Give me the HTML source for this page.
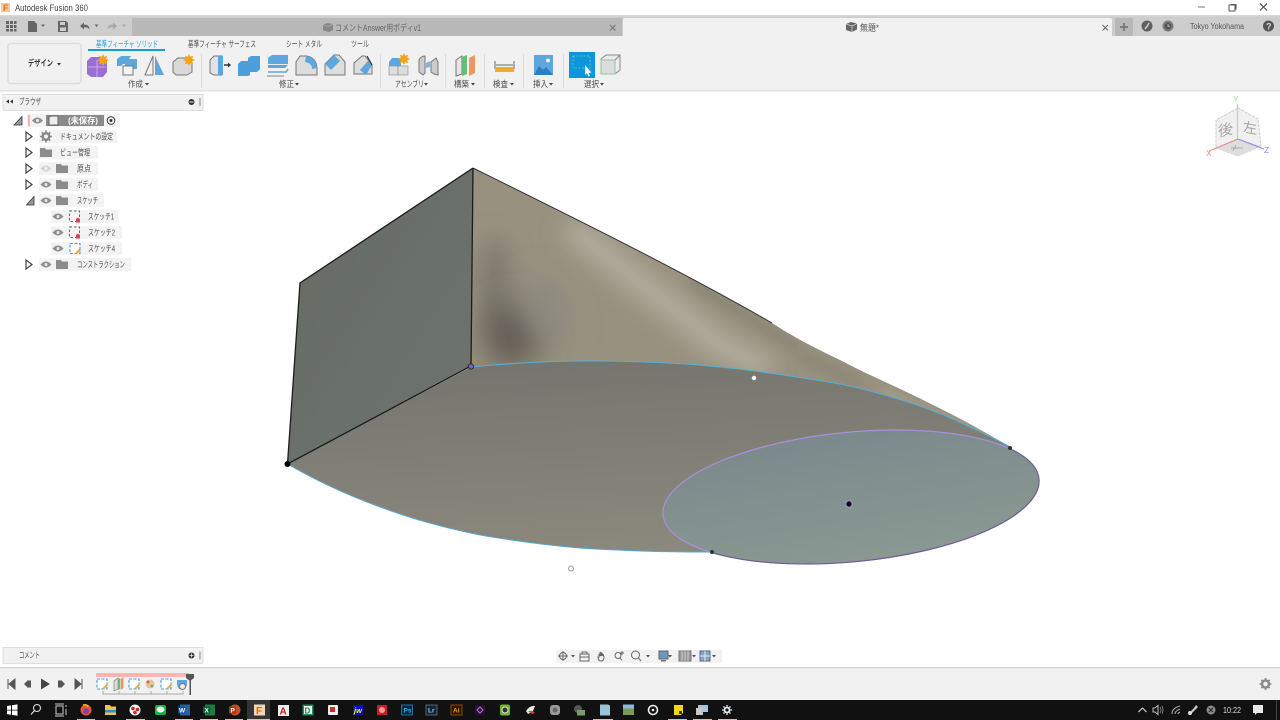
<!DOCTYPE html>
<html lang="ja"><head><meta charset="utf-8"><title>Autodesk Fusion 360</title>
<style>
html,body{margin:0;padding:0;width:1280px;height:720px;overflow:hidden;background:#fff}
svg{display:block;filter:blur(.3px)}
text{font-family:"Liberation Sans","Noto Sans CJK JP",sans-serif;fill:#4c4c4c;font-size:8.5px}
</style></head><body>
<svg width="1280" height="720" viewBox="0 0 1280 720" xmlns="http://www.w3.org/2000/svg">
<defs>
<linearGradient id="gL" x1="0" y1="0" x2="1" y2="1"><stop offset="0" stop-color="#666a63"/><stop offset="1" stop-color="#6d7570"/></linearGradient>
<linearGradient id="gB" x1="0.2" y1="0" x2="0.4" y2="1"><stop offset="0" stop-color="#75756f"/><stop offset="1" stop-color="#8b897d"/></linearGradient>
<linearGradient id="gE" x1="0.3" y1="0" x2="0.5" y2="1"><stop offset="0" stop-color="#7b898c"/><stop offset="1" stop-color="#8a9892"/></linearGradient>
<filter id="b4" x="-50%" y="-50%" width="200%" height="200%"><feGaussianBlur stdDeviation="5"/></filter>
<filter id="b8" x="-60%" y="-60%" width="220%" height="220%"><feGaussianBlur stdDeviation="11"/></filter>
<filter id="b14" x="-100%" y="-100%" width="300%" height="300%"><feGaussianBlur stdDeviation="15"/></filter>
<clipPath id="cS"><path d="M473 168C570 216 680 270 772 323C795 338 815 348 840 360C870 376 900 388 929 403C960 418 985 432 1010 447C998 440 985 434 972 428C952 418 930 409 908 402C885 395 865 389 840 384C812 379 785 375 754 371C732 368 710 366 686 364C655 362 625 361 590 361C550 361 510 363 471 367Z"/></clipPath>
<clipPath id="cD"><path d="M1010 447H1060V590H712V552Z"/></clipPath>
<g id="eye"><path d="M-5.500 0Q0 -6 5.500 0Q0 6 -5.500 0Z" fill="#8f8f8f"/><circle r="1.500" fill="#eee"/></g>
<g id="fold"><path d="M-6 -4.500H-1L0 -3H6V4.500H-6Z" fill="#8c8c8c"/></g>
<g id="tri"><path d="M-3 -4.500L3 0L-3 4.500Z" fill="#fff" stroke="#444" stroke-width="1.200"/></g>
<g id="sk"><rect x="-5.500" y="-5.500" width="10" height="10.500" fill="none" stroke="#666" stroke-width="1" stroke-dasharray="2.500 2"/><path d="M1 6V2.500L3 1l2 1.500V6Z" fill="#d9484f"/></g>
<g id="sk2"><rect x="-5" y="-5" width="10" height="10" fill="#fff" stroke="#4a9ed8" stroke-width="1.100" stroke-dasharray="3 1.500"/><path d="M1 5L5 1" stroke="#eca93a" stroke-width="2"/></g>
<g id="star"><path d="M0 -6L1.300 -3.200 4.200 -4.200 3.200 -1.300 6 0 3.200 1.300 4.200 4.200 1.300 3.200 0 6 -1.300 3.200 -4.200 4.200 -3.200 1.300 -6 0 -3.200 -1.300 -4.200 -4.200 -1.300 -3.200Z" fill="#f6a416"/></g>
</defs>

<!-- Title bar -->
<rect width="1280" height="15" fill="#fff"/>
<rect x="1" y="3" width="9" height="9" fill="#f6c9a0"/>
<text x="3" y="11" style="font-size:9px;font-weight:bold;fill:#d9742b">F</text>
<text x="15" y="11" textLength="73" lengthAdjust="spacingAndGlyphs" style="font-size:9.500px;fill:#444">Autodesk Fusion 360</text>
<rect x="1198" y="6.500" width="7" height="1" fill="#777"/>
<rect x="1229" y="5" width="6" height="6" fill="none" stroke="#555"/><path d="M1231 4.500h5v5" fill="none" stroke="#555"/>
<path d="M1260 3.500l7 7m0-7l-7 7" stroke="#444" fill="none"/>

<!-- Tab bar -->
<rect y="15" width="1280" height="21" fill="#cdcdcd"/>
<rect y="15" width="1280" height="1.500" fill="#d8d8d8"/>
<rect x="132" y="18" width="490" height="18" fill="#b9b9b9"/>
<path d="M623 36V20q0-2 2-2H1110q2 0 2 2V36Z" fill="#f1f1f1"/>
<g fill="#666"><rect x="6" y="21" width="3" height="3"/><rect x="10" y="21" width="3" height="3"/><rect x="14" y="21" width="2.500" height="3"/><rect x="6" y="25" width="3" height="3"/><rect x="10" y="25" width="3" height="3"/><rect x="14" y="25" width="2.500" height="3"/><rect x="6" y="29" width="3" height="2.500"/><rect x="10" y="29" width="3" height="2.500"/><rect x="14" y="29" width="2.500" height="2.500"/></g>
<path d="M28 21h6l3 3v8h-9Z" fill="#666"/><path d="M41 24.500h4l-2 2.500Z" fill="#666"/>
<path d="M58 21h8l2 2v9H58Z" fill="#666"/><rect x="60" y="22" width="5" height="3" fill="#cdcdcd"/><rect x="60" y="27.500" width="6" height="3.500" fill="#cdcdcd"/>
<path d="M80 26l4-3.500v2.200c3-.3 5.500 1.200 5.500 5-1-2-3-2.600-5.500-2.400v2.200Z" fill="#666"/><path d="M94.500 24.500h4l-2 2.500Z" fill="#666"/>
<path d="M117 26l-4-3.500v2.200c-3-.3-5.500 1.200-5.500 5 1-2 3-2.600 5.500-2.400v2.200Z" fill="#a6a6a6"/><path d="M122 24.500h4l-2 2.500Z" fill="#a6a6a6"/>
<path d="M323 25l4-2 6 1v6l-4 2-6-1.500Z" fill="#888"/><path d="M323 25l6 1.500 4-2.500" fill="none" stroke="#b9b9b9" stroke-width=".6"/>
<text x="335" y="31" textLength="86" lengthAdjust="spacingAndGlyphs" style="font-size:9px;fill:#666">コメントAnswer用ボディv1</text>
<path d="M610 25l5.500 5.500m0-5.500l-5.500 5.500" stroke="#777" stroke-width="1.200"/>
<path d="M846 24l5-2 6 1.500v6l-5 2.500-6-2Z" fill="#666"/><path d="M846 24l6 2 5-2.500M852 26v6" fill="none" stroke="#f1f1f1" stroke-width=".6"/>
<text x="860" y="31" textLength="19" lengthAdjust="spacingAndGlyphs" style="font-size:9px;fill:#555">無題*</text>
<path d="M1102.500 25l5.500 5.500m0-5.500l-5.500 5.500" stroke="#666" stroke-width="1"/>
<rect x="1115" y="18" width="18" height="18" fill="#b8b8b8"/>
<path d="M1120 27h8M1124 23v8" stroke="#777" stroke-width="1.800"/>
<circle cx="1147" cy="26" r="5.500" fill="#5f5f5f"/><path d="M1145 29l3-4 1-2" stroke="#cdcdcd" stroke-width="1.500" fill="none"/>
<circle cx="1168" cy="26" r="5.500" fill="#7c7c7c"/><circle cx="1168" cy="26" r="3.500" fill="#555"/><path d="M1168 24v2.300h2" stroke="#ccc" fill="none" stroke-width=".8"/>
<text x="1190" y="29" textLength="54" lengthAdjust="spacingAndGlyphs" style="font-size:8px;fill:#555">Tokyo Yokohama</text>
<circle cx="1268.500" cy="26" r="5.500" fill="#555"/><text x="1266" y="29.500" style="font-size:9px;font-weight:bold;fill:#ddd">?</text>

<!-- Ribbon -->
<rect y="36" width="1280" height="54" fill="#f1f1f1"/>
<rect y="90" width="1280" height="1.500" fill="#e2e2e2"/>
<rect x="8" y="43.500" width="73" height="40" rx="3" fill="#f1f1f1" stroke="#dcdcdc" stroke-width="1.500"/>
<text x="28" y="66" textLength="25" lengthAdjust="spacingAndGlyphs" style="font-size:8.500px;font-weight:bold;fill:#333">デザイン</text>
<path d="M57 63h4l-2 2.500Z" fill="#333"/>

<text x="96" y="47" textLength="62" lengthAdjust="spacingAndGlyphs" style="fill:#2a9ad6;font-size:8.500px">基準フィーチャ ソリッド</text>
<rect x="88" y="49" width="77" height="2" fill="#1a9bd7"/>
<text x="188" y="47" textLength="68" lengthAdjust="spacingAndGlyphs">基準フィーチャ サーフェス</text>
<text x="286" y="47" textLength="36" lengthAdjust="spacingAndGlyphs">シート メタル</text>
<text x="351" y="47" textLength="18" lengthAdjust="spacingAndGlyphs">ツール</text>

<g fill="#dcdcdc"><rect x="201" y="54" width="1" height="34"/><rect x="380" y="54" width="1" height="34"/><rect x="445" y="54" width="1" height="34"/><rect x="484" y="54" width="1" height="34"/><rect x="523" y="54" width="1" height="34"/><rect x="563" y="54" width="1" height="34"/></g>

<text x="128" y="87" textLength="15" lengthAdjust="spacingAndGlyphs">作成</text><path d="M145 83h4l-2 2.500Z" fill="#444"/>
<text x="279" y="87" textLength="15" lengthAdjust="spacingAndGlyphs">修正</text><path d="M295 83h4l-2 2.500Z" fill="#444"/>
<text x="395" y="87" textLength="29" lengthAdjust="spacingAndGlyphs">アセンブリ</text><path d="M424 83h4l-2 2.500Z" fill="#444"/>
<text x="454" y="87" textLength="15" lengthAdjust="spacingAndGlyphs">構築</text><path d="M471 83h4l-2 2.500Z" fill="#444"/>
<text x="493" y="87" textLength="15" lengthAdjust="spacingAndGlyphs">検査</text><path d="M510 83h4l-2 2.500Z" fill="#444"/>
<text x="533" y="87" textLength="15" lengthAdjust="spacingAndGlyphs">挿入</text><path d="M549 83h4l-2 2.500Z" fill="#444"/>
<text x="584" y="87" textLength="15" lengthAdjust="spacingAndGlyphs">選択</text><path d="M600 83h4l-2 2.500Z" fill="#444"/>

<!-- Ribbon icons -->
<path d="M87 61l4-4h11l5 3v12l-4 5H91l-4-3Z" fill="#9a6fd0"/><path d="M88 67h18M97 60v17" stroke="#c9a9e8" stroke-width="1"/>
<use href="#star" x="103" y="60"/>
<path d="M117 59l4-3h10l-2 3v5h-6l-2 2h-4Z" fill="#5ba7de"/><path d="M125 61l3-2h9v10h-12Z" fill="#5ba7de"/><rect x="123" y="66" width="10" height="9" fill="#f4f4f4" stroke="#777"/>
<path d="M145 75l8-19v19Z" fill="#f1f1f1" stroke="#777"/><path d="M155 56l9 19h-9Z" fill="#5ba7de"/>
<path d="M173 62l5-4h8l6 4v10l-5 3H176l-3-3Z" fill="#d9d9d9" stroke="#777"/><use href="#star" x="189" y="60"/>
<path d="M210 60l4-4h8v19h-8l-4-2Z" fill="#e2e2e2" stroke="#777"/><path d="M218 56h5v19h-5Z" fill="#5ba7de"/><path d="M224 65h5" stroke="#333" stroke-width="1.500"/><path d="M228 62.500l3 2.500-3 2.500Z" fill="#333"/>
<path d="M238 64l3-3h7v-3l3-2h9v13l-3 3h-7v3l-2 1h-10Z" fill="#4d9fdc"/>
<path d="M268 58l4-3h16v10l-3 3h-17Z" fill="#5ba7de"/><path d="M268 72h18l2-3" fill="none" stroke="#5ba7de" stroke-width="1.500"/><path d="M267 76h17" stroke="#999" stroke-width="1.200"/><path d="M268 64.500h20" stroke="#e8e8e8"/>
<path d="M296 75V62l4-6h6q10 1 11 12v7Z" fill="#ddd" stroke="#777"/><path d="M306 56q10 1 11 12l-5 1q0-6-7-7Z" fill="#5ba7de"/>
<path d="M325 75V64l9-9h5l6 7v13Z" fill="#ddd" stroke="#777"/><path d="M325 64l9-9 6 6-9 9Z" fill="#5ba7de"/>
<path d="M354 74V63l8-7h3l7 9v9Z" fill="#ddd" stroke="#777"/><path d="M360 70l8-9 4 4-6 10Z" fill="#5ba7de"/><path d="M367 56l5 9" stroke="#333" stroke-width="1.200"/>
<path d="M389 62l3-4h9v8h-12Z" fill="#5ba7de"/><rect x="389" y="66" width="9" height="9" fill="#ddd" stroke="#888" stroke-width=".6"/><rect x="398" y="66" width="10" height="9" fill="#ddd" stroke="#888" stroke-width=".6"/>
<use href="#star" x="404" y="59"/>
<path d="M419 60q2-4 6-4v17l-2 2-4-3Z" fill="#ccc" stroke="#777"/><path d="M431 62l5-4 2 4v13l-4-1-3-2Z" fill="#ccc" stroke="#777"/><path d="M426 63l4-2v6l-4 1Z" fill="#7db5e0"/>
<path d="M456 60l6-4v18l-6 2Z" fill="#e6e6e6" stroke="#777"/><path d="M462 57l5-2v19l-5 2Z" fill="#62bf78"/><path d="M469 58l6-3v18l-6 3Z" fill="#e69a63"/>
<path d="M495 61v8M514 61v8M496 65h17" stroke="#666" fill="none" stroke-width="1"/><rect x="495" y="67" width="19" height="5" fill="#f0ab2e"/>
<rect x="534" y="55" width="19" height="20" fill="#5ba7de"/><path d="M534 75l5-9 4 4 3-3 7 8Z" fill="#2f7fc0"/><circle cx="548" cy="60.500" r="2" fill="#e9f3fa"/>
<rect x="569" y="52" width="26" height="26" fill="#0d96dd"/>
<rect x="573" y="56" width="17" height="12" fill="none" stroke="#58c7a0" stroke-width="1" stroke-dasharray="2 1.500"/>
<path d="M585 65v10l2-2 1.500 3.500 1.500-.8-1.500-3h3Z" fill="#fff"/>
<path d="M601 59l5-4h14v15l-5 4h-14Z" fill="#ececec" stroke="#888"/><rect x="601" y="60" width="14" height="14" fill="#dcdcdc" stroke="#8ec9a4"/><path d="M615 60l5-5" stroke="#888"/>

<!-- Browser panel -->
<rect x="3" y="94.500" width="200" height="16" fill="#f1f1f1" stroke="#dedede"/>
<path d="M9 99.500v4l-3-2ZM13 99.500v4l-3-2Z" fill="#333"/>
<text x="19" y="104.500" textLength="22" lengthAdjust="spacingAndGlyphs">ブラウザ</text>
<circle cx="191.500" cy="102" r="3" fill="#333"/><rect x="189.500" y="101.500" width="4" height="1" fill="#eee"/>
<rect x="199" y="98" width="2" height="8" fill="#bbb"/>

<rect x="27" y="114" width="93" height="13" fill="#f3f3f3"/>
<path d="M14 125L22 116.500v8.500Z" fill="#999" stroke="#333" stroke-width=".8"/>
<rect x="28" y="115" width="1.800" height="11" fill="#f7a9a9"/>
<use href="#eye" x="37.500" y="120.500"/>
<rect x="46" y="115" width="58" height="11" fill="#8a8a8a"/>
<path d="M49 117l2-1h7v9h-9Z" fill="#eee" stroke="#666"/>
<text x="68" y="123.500" textLength="30" lengthAdjust="spacingAndGlyphs" style="fill:#fff;font-weight:bold">(未保存)</text>
<circle cx="111" cy="120.500" r="3.800" fill="#fff" stroke="#333"/><circle cx="111" cy="120.500" r="1.500" fill="#333"/>

<rect x="39" y="130" width="78" height="13" fill="#f3f3f3"/>
<use href="#tri" x="29" y="136.500"/>
<g transform="translate(46 136.500)"><circle r="3.300" fill="none" stroke="#888" stroke-width="2.500"/><path d="M0-6v2M0 4v2M-6 0h2M4 0h2M-4.200-4.200l1.400 1.400M2.800 2.800l1.400 1.400M-4.200 4.200l1.400-1.400M2.800-2.800l1.400-1.400" stroke="#888" stroke-width="1.600"/></g>
<text x="60" y="139.500" textLength="53" lengthAdjust="spacingAndGlyphs">ドキュメントの設定</text>

<rect x="39" y="146" width="59" height="13" fill="#f3f3f3"/>
<use href="#tri" x="29" y="152.500"/><use href="#fold" x="46" y="152.500"/>
<text x="60" y="155.500" textLength="30" lengthAdjust="spacingAndGlyphs">ビュー管理</text>

<rect x="39" y="162" width="59" height="13" fill="#f3f3f3"/>
<use href="#tri" x="29" y="168.500"/>
<g opacity=".3"><use href="#eye" x="46" y="168.500"/></g><use href="#fold" x="62" y="168.500"/>
<text x="77" y="171.500" textLength="14" lengthAdjust="spacingAndGlyphs">原点</text>

<rect x="39" y="178" width="59" height="13" fill="#f3f3f3"/>
<use href="#tri" x="29" y="184.500"/><use href="#eye" x="46" y="184.500"/><use href="#fold" x="62" y="184.500"/>
<text x="77" y="187.500" textLength="16" lengthAdjust="spacingAndGlyphs">ボディ</text>

<rect x="39" y="194" width="65" height="13" fill="#f3f3f3"/>
<path d="M26.500 205L34 196.500v8.500Z" fill="#999" stroke="#333" stroke-width=".8"/><use href="#eye" x="46" y="200.500"/><use href="#fold" x="62" y="200.500"/>
<text x="77" y="203.500" textLength="21" lengthAdjust="spacingAndGlyphs">スケッチ</text>

<rect x="51" y="210" width="68" height="13" fill="#f3f3f3"/>
<use href="#eye" x="58" y="216.500"/><use href="#sk" x="75" y="216.500"/>
<text x="88" y="219.500" textLength="26" lengthAdjust="spacingAndGlyphs">スケッチ1</text>

<rect x="51" y="226" width="71" height="13" fill="#f3f3f3"/>
<use href="#eye" x="58" y="232.500"/><use href="#sk" x="75" y="232.500"/>
<text x="88" y="235.500" textLength="27" lengthAdjust="spacingAndGlyphs">スケッチ2</text>

<rect x="51" y="242" width="71" height="13" fill="#f3f3f3"/>
<use href="#eye" x="58" y="248.500"/><use href="#sk2" x="75" y="248.500"/>
<text x="88" y="251.500" textLength="27" lengthAdjust="spacingAndGlyphs">スケッチ4</text>

<rect x="39" y="258" width="92" height="13" fill="#f3f3f3"/>
<use href="#tri" x="29" y="264.500"/><use href="#eye" x="46" y="264.500"/><use href="#fold" x="62" y="264.500"/>
<text x="77" y="267.500" textLength="48" lengthAdjust="spacingAndGlyphs">コンストラクション</text>

<!-- Model -->
<path d="M473 168L300 283 287.500 464 471 366Z" fill="url(#gL)"/>
<path d="M473 168C570 216 680 270 772 323C795 338 815 348 840 360C870 376 900 388 929 403C960 418 985 432 1010 447C998 440 985 434 972 428C952 418 930 409 908 402C885 395 865 389 840 384C812 379 785 375 754 371C732 368 710 366 686 364C655 362 625 361 590 361C550 361 510 363 471 367Z" fill="#98917f"/>
<g clip-path="url(#cS)">
<ellipse cx="495" cy="285" rx="18" ry="48" fill="#7f7c71" filter="url(#b8)"/>
<ellipse cx="512" cy="335" rx="30" ry="34" fill="#635f56" filter="url(#b14)"/>
<ellipse cx="545" cy="310" rx="20" ry="34" transform="rotate(-25 545 310)" fill="#8b8981" filter="url(#b14)"/>
<path d="M570 225C610 262 665 300 722 347L770 370" fill="none" stroke="#b2ac9f" stroke-width="26" filter="url(#b8)"/>
<path d="M690 280C730 305 760 325 800 350" fill="none" stroke="#8c8677" stroke-width="12" filter="url(#b4)"/>
<path d="M800 355L860 385" fill="none" stroke="#8d8878" stroke-width="14" filter="url(#b4)"/>
<path d="M880 392L1000 445" fill="none" stroke="#a29c8b" stroke-width="10" filter="url(#b4)"/>
</g>
<path d="M287.500 464L471 367C510 363 550 361 590 361C625 361 655 362 686 364C710 366 732 368 754 371C785 375 812 379 840 384C865 389 885 395 908 402C930 409 952 418 972 428C985 434 998 440 1010 447L1030 480 725 556 711 552C670 552 625 551 580 548C545 545 515 541 480 535C445 528 412 519 380 507C350 496 320 483 287.500 464Z" fill="url(#gB)"/>
<ellipse cx="851" cy="497" rx="188.800" ry="64.800" transform="rotate(-5.500 851 497)" fill="url(#gE)" stroke="#a78fda" stroke-width="1.300"/>
<g clip-path="url(#cD)"><ellipse cx="851" cy="497" rx="188.800" ry="64.800" transform="rotate(-5.500 851 497)" fill="none" stroke="#665d85" stroke-width="1.100"/></g>
<path d="M473 168C570 216 680 270 772 323" fill="none" stroke="#333" stroke-width="1"/>
<path d="M473 168L300 283 287.500 464 471 366 473 168" fill="none" stroke="#1c1c1c" stroke-width="1.300"/>
<path d="M471 367C510 363 550 361 590 361C625 361 655 362 686 364C710 366 732 368 754 371C785 375 812 379 840 384C865 389 885 395 908 402C930 409 952 418 972 428C985 434 998 440 1010 447" fill="none" stroke="#55aed6" stroke-width="1.100"/>
<path d="M287.500 464C320 483 350 496 380 507C412 519 445 528 480 535C515 541 545 545 580 548C625 551 670 552 711 552" fill="none" stroke="#55a8cc" stroke-width="1"/>
<circle cx="287.500" cy="464" r="3" fill="#000"/>
<circle cx="471" cy="366.500" r="2.700" fill="#7a5fc0" stroke="#222" stroke-width=".8"/>
<circle cx="754" cy="378" r="2.200" fill="#fff" stroke="#aaa" stroke-width=".5"/>
<circle cx="1010" cy="448" r="2" fill="#333"/>
<circle cx="712" cy="552" r="2" fill="#333"/>
<circle cx="849" cy="504" r="3.200" fill="#000" stroke="#b49be0" stroke-width="1"/>
<circle cx="571" cy="568.500" r="2.500" fill="#fff" stroke="#999"/>

<!-- ViewCube -->
<path d="M1238 108L1258 119 1261 146 1238 156 1216 148 1216 120Z" fill="#f0f0f0" stroke="#cfcfcf" stroke-dasharray="3 1"/>
<path d="M1216 148L1238 139 1261 146 1238 156Z" fill="#dedede"/>
<g transform="translate(1226 130) skewY(-14)"><text x="-8" y="5" style="font-size:15px;fill:#a6a6a6">後</text></g>
<g transform="translate(1250 128) skewY(10)"><text x="-7" y="5" style="font-size:14px;fill:#a6a6a6">左</text></g>
<path d="M1231 148h12M1236 145l-3 6" stroke="#aaa" fill="none"/>
<path d="M1237.500 139V104" stroke="#9be89b" stroke-width="1.200"/>
<path d="M1238 139L1209 151" stroke="#ea8a8a" stroke-width="1.200"/>
<path d="M1238 139L1264 149" stroke="#8a8aee" stroke-width="1.200"/>
<text x="1233" y="102" style="font-size:8.500px;fill:#90e890">Y</text>
<text x="1206" y="156" style="font-size:8.500px;fill:#f08a8a">X</text>
<text x="1264" y="153" style="font-size:8.500px;fill:#8a8af0">Z</text>

<!-- Comment panel -->
<rect x="3" y="647.500" width="200" height="16" fill="#f1f1f1" stroke="#dedede"/>
<text x="19" y="658" textLength="21" lengthAdjust="spacingAndGlyphs">コメント</text>
<circle cx="191.500" cy="655.500" r="3" fill="#333"/><path d="M189.500 655.500h4M191.500 653.500v4" stroke="#eee" stroke-width=".8"/>
<rect x="199" y="651.500" width="2" height="8" fill="#bbb"/>

<!-- Viewport toolbar -->
<rect x="556" y="650" width="166" height="13" fill="#f2f2f2"/>
<g fill="none" stroke="#666" stroke-width="1">
<circle cx="563" cy="656" r="3.500"/><path d="M558 656h10M563 651v10"/>
<rect x="580" y="654" width="9" height="7"/><path d="M582 654v-2h5v2M580 657h9"/>
<path d="M599 657v-3l1 2v-4l1 4v-4l1 4v-3l1 3v-2l1 3q0 4-3 4t-3-4Z"/>
<circle cx="618" cy="655.500" r="3"/><path d="M620 658l2 2.500M622 651v4M620 653h4"/>
<circle cx="635.500" cy="655" r="4"/><path d="M638.500 658l2.500 3"/>
</g>
<path d="M571 655h4l-2 2.500ZM646 655h4l-2 2.500ZM668 655h4l-2 2.500ZM692 655h4l-2 2.500ZM712 655h4l-2 2.500Z" fill="#555"/>
<rect x="659" y="651" width="9" height="8" fill="#6f96bd" stroke="#666"/><rect x="661" y="660" width="5" height="1.500" fill="#777"/>
<rect x="679" y="651" width="12" height="10" fill="#999" stroke="#777"/><path d="M682 651v10M685 651v10M688 651v10" stroke="#ccc"/>
<rect x="700" y="651" width="10" height="10" fill="#7aa7d6" stroke="#666"/><path d="M700 656h10M705 651v10" stroke="#eee"/>

<!-- Timeline -->
<rect y="667" width="1280" height="1.500" fill="#d8d8d8"/>
<rect y="668.500" width="1280" height="31.500" fill="#f1f1f1"/>
<path d="M8 679v10M15 679l-6 5 6 5Z" stroke="#555" fill="#555"/>
<path d="M28 680l-4 4 4 4ZM28 680.500h3v7h-3Z" fill="#555"/>
<path d="M41 678.500l9 5.500-9 5.500Z" fill="#444"/>
<path d="M61 680l4 4-4 4ZM58 680.500h3v7h-3Z" fill="#555"/>
<path d="M82 679v10M75 679l6 5-6 5Z" stroke="#555" fill="#555"/>
<rect x="96" y="673" width="93" height="4" fill="#ffb3b3"/>
<use href="#sk2" x="102" y="684"/>
<path d="M114 681l4-3v11l-4 2Z" fill="#ddd" stroke="#777" stroke-width=".6"/><path d="M118 679l2-1v11l-2 1Z" fill="#62bf78"/><path d="M120.500 679l3-2v11l-3 2Z" fill="#e69a63"/>
<use href="#sk2" x="134" y="684"/>
<circle cx="150" cy="684" r="4.500" fill="#e9c39e"/><circle cx="148" cy="682" r="1.500" fill="#d9653a"/><circle cx="152" cy="686" r="1.500" fill="#6fb27a"/>
<use href="#sk2" x="166" y="684"/>
<path d="M177 680h10v5l-2 4h-6l-2-4Z" fill="#5ba7de"/><circle cx="182.500" cy="686.500" r="3" fill="#eee" stroke="#777"/>
<path d="M103 691v3h80v-3M119 691v3M135 691v3M151 691v3M167 691v3" fill="none" stroke="#aaa"/>
<path d="M186 674h8v4l-4 3-4-3Z" fill="#555"/><rect x="189.500" y="680" width="1.500" height="15" fill="#555"/>
<g transform="translate(1265.500 684)"><circle r="3.500" fill="none" stroke="#8a8a8a" stroke-width="2.500"/><path d="M0-6v2M0 4v2M-6 0h2M4 0h2M-4.200-4.200l1.400 1.400M2.800 2.800l1.400 1.400M-4.200 4.200l1.400-1.400M2.800-2.800l1.400-1.400" stroke="#8a8a8a" stroke-width="1.600"/></g>

<!-- Taskbar -->
<rect y="700" width="1280" height="20" fill="#111"/>
<rect x="247" y="700" width="23" height="20" fill="#343434"/>
<g fill="#f7aeae"><rect x="77" y="719" width="18" height="1"/><rect x="126" y="719" width="19" height="1"/><rect x="175" y="719" width="18" height="1"/><rect x="200" y="719" width="18" height="1"/><rect x="225" y="719" width="18" height="1"/><rect x="247" y="719" width="23" height="1"/><rect x="593" y="719" width="20" height="1"/><rect x="668" y="719" width="19" height="1"/><rect x="693" y="719" width="19" height="1"/><rect x="718" y="719" width="19" height="1"/></g>
<path d="M7 706l4-.6v4.300H7ZM12 705.200l5.500-.8v5.300H12ZM7 710.500h4v4.200l-4-.6ZM12 710.500h5.500v5.200l-5.500-.8Z" fill="#fff"/>
<circle cx="37" cy="708" r="3.500" fill="none" stroke="#ddd" stroke-width="1.100"/><path d="M34.500 710.500l-3.500 4" stroke="#ddd" stroke-width="1.200"/>
<rect x="56" y="706" width="7" height="8" fill="none" stroke="#ccc"/><path d="M55 704h9M55 716h9M66 705v2M66 709v6" stroke="#ccc"/>
<circle cx="86" cy="710" r="5.500" fill="#e8571f"/><circle cx="86" cy="711" r="3" fill="#7a3fc0"/><path d="M83 705q4-1 5 2" stroke="#f5b02e" fill="none" stroke-width="1.500"/>
<path d="M105 705h5l1 1.500h5V715h-11Z" fill="#f3c440"/><rect x="105" y="710" width="11" height="2.500" fill="#2a8fd8"/>
<circle cx="135" cy="710" r="5.500" fill="#f4f4f4"/><circle cx="133" cy="708.500" r="1.800" fill="#cc2233"/><circle cx="137.500" cy="709.500" r="1.800" fill="#cc2233"/><circle cx="135" cy="712.500" r="1.800" fill="#cc2233"/>
<rect x="155" y="705" width="11" height="10" rx="2" fill="#09b83e"/><ellipse cx="160.500" cy="709.500" rx="4" ry="3" fill="#fff"/>
<rect x="180" y="704.500" width="10" height="11" fill="#2b5fa8"/><rect x="178" y="706.500" width="7" height="7" fill="#1a4a8f"/><text x="179" y="712.500" style="font-size:6.500px;font-weight:bold;fill:#fff">W</text>
<rect x="205" y="704.500" width="10" height="11" fill="#1f7a45"/><rect x="203" y="706.500" width="7" height="7" fill="#0f5a30"/><text x="204.500" y="712.500" style="font-size:6.500px;font-weight:bold;fill:#fff">X</text>
<circle cx="235" cy="710" r="5.500" fill="#cf4a27"/><rect x="229" y="706.500" width="7" height="7" fill="#a8371a"/><text x="230.500" y="712.500" style="font-size:6.500px;font-weight:bold;fill:#fff">P</text>
<rect x="254" y="704.500" width="11" height="11" fill="#f6d6b5"/><text x="256" y="714" style="font-size:10px;font-weight:bold;fill:#c96a1f">F</text>
<rect x="278" y="705" width="11" height="11" fill="#eee"/><text x="279.500" y="714.500" style="font-size:10px;font-weight:bold;fill:#c0202a">A</text>
<rect x="302.500" y="704.500" width="11" height="11" fill="#1f8a5a"/><rect x="304" y="706" width="8" height="8" fill="#eee"/><text x="304.500" y="713.500" style="font-size:8px;font-weight:bold;fill:#1f8a5a">D</text>
<rect x="328" y="705" width="10" height="10" rx="1" fill="#eee"/><rect x="330" y="707" width="5" height="5" fill="#c9302c"/>
<rect x="353" y="705" width="10" height="10" fill="#0a0ad0"/><text x="354" y="713" style="font-size:7.500px;font-weight:bold;font-style:italic;fill:#ff0">jw</text>
<rect x="377" y="705" width="10" height="10" fill="#c81e2a"/><circle cx="382" cy="710" r="3" fill="#f09aa0"/>
<rect x="401.500" y="705" width="11" height="10" fill="#06283d" stroke="#1f8ab0" stroke-width=".8"/><text x="403.500" y="712.500" style="font-size:6.500px;font-weight:bold;fill:#31a8ff">Ps</text>
<rect x="426" y="705" width="11" height="10" fill="#14232f" stroke="#5c7a90" stroke-width=".8"/><text x="428" y="712.500" style="font-size:6.500px;font-weight:bold;fill:#a7c4da">Lr</text>
<rect x="451" y="705" width="11" height="10" fill="#2a1400" stroke="#a8560a" stroke-width=".8"/><text x="453" y="712.500" style="font-size:6.500px;font-weight:bold;fill:#ff9a00">Ai</text>
<rect x="475" y="705" width="10" height="10" fill="#2a0f3a"/><path d="M477 710l3-3 3 3-3 3Z" fill="none" stroke="#a27ad0"/>
<rect x="500" y="704.500" width="10" height="11" rx="2" fill="#6eb52f"/><circle cx="505" cy="710" r="3" fill="#333" stroke="#ddd"/>
<path d="M526 711q4-6 9-5l-2 5-5 3Z" fill="#e9e9e9"/><path d="M528 711h5l2 2-3 1Z" fill="#d04040"/>
<rect x="550" y="705" width="10" height="10" rx="3" fill="#9a9a9a"/><circle cx="555" cy="710" r="2.500" fill="#666"/>
<circle cx="578" cy="709" r="4" fill="#555"/><rect x="577" y="710" width="8" height="5.500" fill="#7a9a6a"/>
<path d="M600 704.500h8l2 1v10h-10Z" fill="#9cc4d8"/>
<rect x="623" y="704.500" width="11" height="10.500" fill="#7a9a55"/><rect x="623" y="704.500" width="11" height="4" fill="#8fb7d8"/>
<circle cx="653" cy="710" r="4.500" fill="none" stroke="#eee" stroke-width="1.600"/><circle cx="653" cy="710" r="1.300" fill="#eee"/>
<path d="M674 705h9v8l-2 2h-7Z" fill="#f7d51d"/><rect x="679" y="711" width="3" height="3" fill="#333"/>
<rect x="698" y="705" width="10" height="7" fill="#a9c4d8"/><rect x="696" y="708" width="7" height="7" fill="#c8c8c8"/>
<g transform="translate(727 710)"><circle r="2.500" fill="none" stroke="#eee" stroke-width="1.800"/><path d="M0-5v1.500M0 3.500V5M-5 0h1.500M3.500 0H5M-3.500-3.500l1 1M2.500 2.500l1 1M-3.500 3.500l1-1M2.500-2.500l1-1" stroke="#eee" stroke-width="1.300"/></g>

<path d="M1138.500 712l4-4 4 4" fill="none" stroke="#ddd" stroke-width="1.100"/>
<path d="M1153 708h2l3-2.500v9l-3-2.500h-2Z" fill="none" stroke="#bbb"/><path d="M1160 707q2 3 0 6M1162 706q2 4 0 8" fill="none" stroke="#777"/>
<path d="M1172 714q0-6 8-8M1175 714q0-3 5-5M1178 714q0-1 2-2" fill="none" stroke="#aaa"/>
<path d="M1188 714l6-6 2-3 2 2-3 3-5 5Z" fill="#ccc"/><circle cx="1190" cy="713" r="2" fill="#ddd"/>
<circle cx="1211" cy="710" r="4.500" fill="#8a8a8a"/><path d="M1209 708l4 4m0-4l-4 4" stroke="#222"/>
<text x="1223" y="713" textLength="18" lengthAdjust="spacingAndGlyphs" style="font-size:8px;fill:#ddd">10:22</text>
<path d="M1253 705h10v8h-6l-2 2v-2h-2Z" fill="#e8e8e8"/>
<rect x="1276" y="700" width="1" height="20" fill="#444"/>
</svg>
</body></html>
